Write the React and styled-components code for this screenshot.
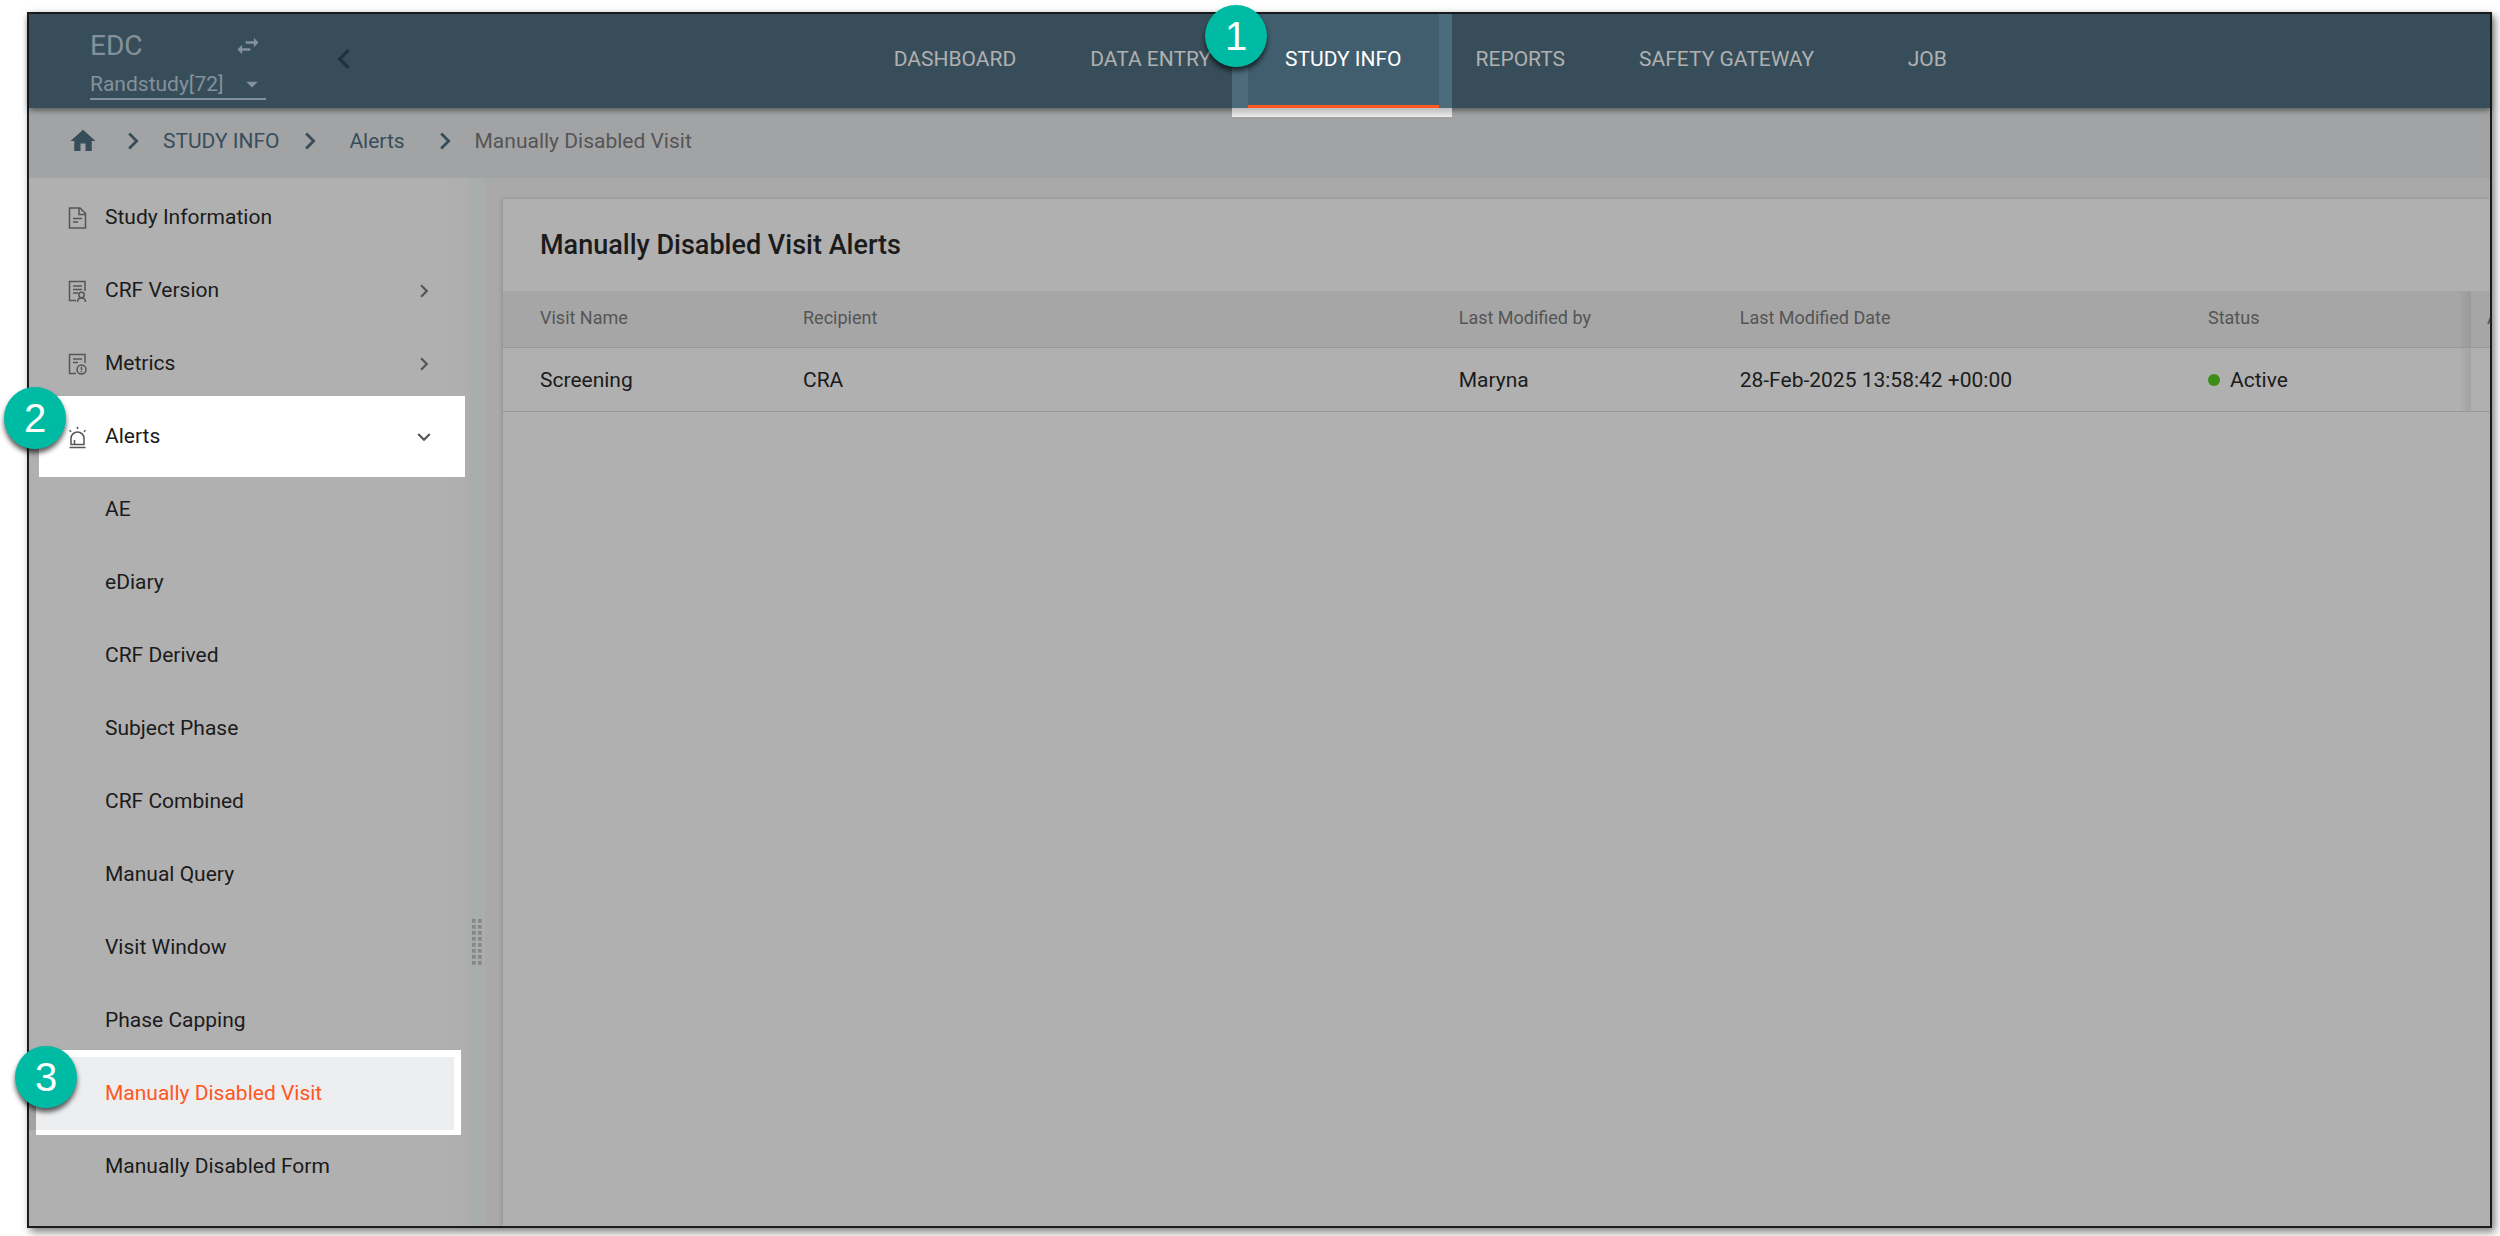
import React from "react";
import styled, { createGlobalStyle, css } from "styled-components";
import {
  MdHome,
  MdChevronRight,
  MdChevronLeft,
  MdExpandMore,
  MdSwapHoriz,
  MdArrowDropDown,
} from "react-icons/md";

const GlobalStyle = createGlobalStyle`
  *, *::before, *::after { box-sizing: border-box; }
  body {
    margin: 0;
    background: #fff;
    font-family: Roboto, "Liberation Sans", sans-serif;
    font-size: 21px;
    line-height: 28px;
    color: #1b1b1b;
  }
  button, select { font: inherit; color: inherit; }
  a { color: inherit; text-decoration: none; }
`;

const Page = styled.div`
  min-height: 100vh;
  padding: 12px 8px 8px 27px;
  display: flex;
`;

const Frame = styled.div`
  flex: 1;
  min-width: 0;
  display: flex;
  flex-direction: column;
  border: 2px solid #1a1c1e;
  background: #b0b0b0;
  box-shadow: 3px 4px 8px rgba(0, 0, 0, 0.5);
`;

const Header = styled.header`
  position: relative;
  z-index: 2;
  height: 94px;
  display: flex;
  background: #374e5a;
  box-shadow: 0 2px 6px rgba(0, 0, 0, 0.5);
`;

const Brand = styled.div`
  width: 341px;
  padding: 0 6px 0 61px;
  display: flex;
  justify-content: space-between;
`;

const BrandInfo = styled.div`
  width: 176px;
  padding-top: 12px;
  color: #84919a;
`;

const BrandTop = styled.div`
  height: 40px;
  display: flex;
  align-items: center;
  justify-content: space-between;
  padding-right: 4px;
  font-size: 28px;
`;

const IconButton = styled.button`
  display: flex;
  align-items: center;
  padding: 0;
  border: 0;
  background: none;
  color: ${(p) => p.$color || "inherit"};
`;

const StudyPicker = styled.label`
  display: flex;
  align-items: center;
  justify-content: space-between;
  height: 34px;
  padding-top: 4px;
  border-bottom: 2px solid #84919a;

  select {
    flex: 1;
    padding: 0;
    border: 0;
    appearance: none;
    background: none;
  }
`;

const CollapseSlot = styled.div`
  display: flex;
  align-items: center;
  height: 90px;
`;

const Nav = styled.nav`
  flex: 1;
  display: flex;
  justify-content: center;
`;

const Tab = styled.a`
  position: relative;
  z-index: ${(p) => (p.$active ? 1 : 0)};
  min-width: 152px;
  padding: 0 37px 4px;
  display: flex;
  justify-content: center;
  align-items: center;
  color: ${(p) => (p.$active ? "#fff" : "#b0b0b0")};
  white-space: nowrap;
`;

const TabSpotlight = styled.span`
  position: absolute;
  z-index: -1;
  top: 0;
  bottom: -9px;
  left: -16px;
  right: -13px;
  background: linear-gradient(#4c6c7c calc(100% - 9px), #bdbcbd calc(100% - 9px), #ececed 100%);
`;

const TabFill = styled.span`
  position: absolute;
  z-index: -1;
  inset: 0;
  background: #405e6e;
  border-bottom: 3px solid #ff5722;
`;

const Badge = styled.span`
  position: absolute;
  z-index: 3;
  left: ${(p) => p.$left}px;
  top: ${(p) => p.$top}px;
  width: 62px;
  height: 62px;
  border-radius: 50%;
  display: flex;
  align-items: center;
  justify-content: center;
  background: #00bba4;
  box-shadow: 0 4px 5px rgba(0, 0, 0, 0.65);
  color: #fff;
  font-family: "Liberation Sans", Arial, sans-serif;
  font-size: 40px;
  line-height: 44px;
`;

const Breadcrumbs = styled.nav`
  height: 70px;
  padding: 0 0 4px 39px;
  display: flex;
  align-items: center;
  background: #a2a3a5;
  color: #374e5a;
  box-shadow: 0 1px 3px rgba(0, 0, 0, 0.06);

  > svg { margin: 0 13px; }
`;

const CrumbLink = styled.a`
  display: flex;
  justify-content: center;
  min-width: ${(p) => (p.$icon ? 0 : 75)}px;
  margin-right: ${(p) => (p.$icon ? 5 : 0)}px;
`;

const CrumbCurrent = styled.span`
  color: #555;
`;

const Body = styled.div`
  flex: 1;
  display: flex;
`;

const Sidebar = styled.aside`
  width: 440px;
  flex: none;
  padding: 3px 15px 23px 0;
  background: linear-gradient(to right, #b0b0b0 94%, #adaead);
`;

const Menu = styled.ul`
  margin: 0;
  padding: 0;
  list-style: none;
`;

const Item = styled.li`
  position: relative;
  isolation: isolate;
  z-index: ${(p) => (p.$spot ? 1 : 0)};
  background: ${(p) => (p.$spot === "selected" ? "#a2a2a3" : "none")};

  ${(p) =>
    p.$spot &&
    css`
      &::before {
        content: "";
        position: absolute;
        z-index: -1;
        ${p.$spot === "open"
          ? "inset: -4px -11px -4px 10px; background: #fff;"
          : "inset: -7px -7px -5px 7px; background: #edeef0; border: solid #fff; border-width: 7px 7px 5px 0;"}
      }
    `}
`;

const ItemControl = styled.button`
  width: 100%;
  height: 73px;
  padding: 0 17px 0 ${(p) => (p.$child ? 76 : 38)}px;
  display: flex;
  align-items: center;
  gap: 16px;
  border: 0;
  background: none;
  text-align: left;
  color: ${(p) => (p.$selected ? "#ff5722" : "#1b1b1b")};

  > span { flex: 1; padding-bottom: 2px; }
  > svg { flex: none; color: #555; }
`;

const Splitter = styled.div`
  width: 16px;
  flex: none;
  display: flex;
  align-items: flex-end;
  justify-content: center;
  padding-bottom: 261px;
  background: #a9adab;
`;

const Grip = styled.div`
  display: grid;
  grid-template-columns: 4px 4px;
  grid-auto-rows: 4px;
  gap: 2px;

  i { background: #858786; border: 1px solid #929493; border-width: 0 1px 1px 0; }
`;

const Content = styled.main`
  flex: 1;
  min-width: 0;
  display: flex;
  padding: 21px 0 0 18px;
  background: #a9a9a9;
`;

const Card = styled.section`
  flex: 1;
  min-width: 0;
  background: #b0b0b0;
  box-shadow: -1px 0 4px rgba(0, 0, 0, 0.16);
  clip-path: inset(-4px 0 0 -6px);
`;

const Title = styled.h1`
  margin: 0;
  height: 92px;
  padding: 0 37px;
  display: flex;
  align-items: center;
  font-size: 27px;
  line-height: 36px;
  font-weight: 500;
`;

const Table = styled.table`
  width: 100%;
  table-layout: fixed;
  border-collapse: separate;
  border-spacing: 0;
  text-align: left;

  th, td {
    padding: 0 0 0 20px;
    border-bottom: 1px solid #989898;
    white-space: nowrap;
    overflow: hidden;
    font-weight: 400;
  }
  th:first-child, td:first-child { padding-left: 37px; }
  th { height: 57px; padding-bottom: 2px; font-size: 18px; color: #555; background: #a6a6a6; }
  td { height: 64px; }
  th:nth-last-child(2), td:nth-last-child(2) {
    background-image: linear-gradient(to left, rgba(0, 0, 0, 0.08), transparent 12px);
  }
  th:last-child, td:last-child { padding-left: 16px; }
`;

const Col = styled.col`
  width: ${(p) => p.$width};
`;

const Status = styled.span`
  display: flex;
  align-items: center;
  gap: 10px;

  &::before {
    content: "";
    width: 12px;
    height: 12px;
    border-radius: 50%;
    background: #3c8e16;
  }
`;

function Glyph({ children }) {
  return (
    <svg width="22" height="24" viewBox="0 0 22 24" fill="none" stroke="currentColor" strokeWidth="1.5">
      {children}
    </svg>
  );
}

const icons = {
  document: (
    <Glyph>
      <path d="M2.5 2h10.5l5.5 5.5V22h-16z M12 2v6.500h6.500 M6 12.500h9 M6 16h5" />
    </Glyph>
  ),
  version: (
    <Glyph>
      <path d="M9 21.500H2.500V2.500h15.500V12 M6 7h9 M6 10.500h9 M6 14h5" />
      <circle cx="14.500" cy="16" r="2.700" />
      <path d="M10.500 23c0-2.500 1.500-4 4-4s4 1.500 4 4" />
    </Glyph>
  ),
  metrics: (
    <Glyph>
      <path d="M9 21.500H2.500V2.500h15.500V11 M6 7h9 M6 10.500h5" />
      <circle cx="14.500" cy="17.500" r="4.500" />
      <path d="M14.500 14.800v3.200 M14.500 19v1.300" />
    </Glyph>
  ),
  alarm: (
    <Glyph>
      <path d="M2.500 22.500h16 M4 19.500v-6a6.500 6.500 0 0 1 13 0v6z M7.500 19v-4 M10.500 1.800v2.200 M2.500 5.300l1.600 1.400 M18.500 5.300l-1.600 1.400" />
    </Glyph>
  ),
};

const sections = [
  { label: "Study Information", icon: "document" },
  { label: "CRF Version", icon: "version", expandable: true },
  { label: "Metrics", icon: "metrics", expandable: true },
  { label: "Alerts", icon: "alarm", expandable: true, open: true },
];

const alertTypes = [
  "AE",
  "eDiary",
  "CRF Derived",
  "Subject Phase",
  "CRF Combined",
  "Manual Query",
  "Visit Window",
  "Phase Capping",
  "Manually Disabled Visit",
  "Manually Disabled Form",
];

const tabs = ["DASHBOARD", "DATA ENTRY", "STUDY INFO", "REPORTS", "SAFETY GATEWAY", "JOB"];

export default function App() {
  return (
    <>
      <GlobalStyle />
      <Page>
        <Frame>
          <Header>
            <Brand>
              <BrandInfo>
                <BrandTop>
                  EDC
                  <IconButton type="button" aria-label="Switch application">
                    <MdSwapHoriz size={28} />
                  </IconButton>
                </BrandTop>
                <StudyPicker>
                  <select aria-label="Study" defaultValue="72">
                    <option value="72">Randstudy[72]</option>
                  </select>
                  <MdArrowDropDown size={28} />
                </StudyPicker>
              </BrandInfo>
              <CollapseSlot>
                <IconButton type="button" aria-label="Collapse menu" $color="#22313a">
                  <MdChevronLeft size={40} />
                </IconButton>
              </CollapseSlot>
            </Brand>
            <Nav>
              {tabs.map((tab) => {
                const active = tab === "STUDY INFO";
                return (
                  <Tab key={tab} href="#" $active={active}>
                    {active && <TabSpotlight />}
                    {active && <TabFill />}
                    {tab}
                    {active && <Badge $left={-43} $top={-9}>1</Badge>}
                  </Tab>
                );
              })}
            </Nav>
          </Header>
          <Breadcrumbs aria-label="Breadcrumb">
            <CrumbLink href="#" aria-label="Home" $icon>
              <MdHome size={30} />
            </CrumbLink>
            <MdChevronRight size={34} />
            <CrumbLink href="#">STUDY INFO</CrumbLink>
            <MdChevronRight size={34} />
            <CrumbLink href="#">Alerts</CrumbLink>
            <MdChevronRight size={34} />
            <CrumbCurrent>Manually Disabled Visit</CrumbCurrent>
          </Breadcrumbs>
          <Body>
            <Sidebar>
              <Menu>
                {sections.map((s) => (
                  <Item key={s.label} $spot={s.open ? "open" : undefined}>
                    <ItemControl type="button" aria-expanded={s.expandable ? !!s.open : undefined}>
                      {icons[s.icon]}
                      <span>{s.label}</span>
                      {s.expandable && (s.open ? <MdExpandMore size={26} /> : <MdChevronRight size={26} />)}
                    </ItemControl>
                    {s.open && <Badge $left={-25} $top={-13}>2</Badge>}
                  </Item>
                ))}
                {alertTypes.map((label) => {
                  const selected = label === "Manually Disabled Visit";
                  return (
                    <Item key={label} $spot={selected ? "selected" : undefined}>
                      <ItemControl as="a" href="#" $child $selected={selected}>
                        <span>{label}</span>
                      </ItemControl>
                      {selected && <Badge $left={-14} $top={-11}>3</Badge>}
                    </Item>
                  );
                })}
              </Menu>
            </Sidebar>
            <Splitter>
              <Grip>
                {Array.from({ length: 16 }, (_, i) => (
                  <i key={i} />
                ))}
              </Grip>
            </Splitter>
            <Content>
              <Card>
                <Title>Manually Disabled Visit Alerts</Title>
                <Table>
                  <colgroup>
                    <Col $width="280px" />
                    <Col $width="33%" />
                    <Col $width="281px" />
                    <Col $width="auto" />
                    <Col $width="283px" />
                    <Col $width="19px" />
                  </colgroup>
                  <thead>
                    <tr>
                      <th>Visit Name</th>
                      <th>Recipient</th>
                      <th>Last Modified by</th>
                      <th>Last Modified Date</th>
                      <th>Status</th>
                      <th>Action</th>
                    </tr>
                  </thead>
                  <tbody>
                    <tr>
                      <td>Screening</td>
                      <td>CRA</td>
                      <td>Maryna</td>
                      <td>28-Feb-2025 13:58:42 +00:00</td>
                      <td>
                        <Status>Active</Status>
                      </td>
                      <td />
                    </tr>
                  </tbody>
                </Table>
              </Card>
            </Content>
          </Body>
        </Frame>
      </Page>
    </>
  );
}
